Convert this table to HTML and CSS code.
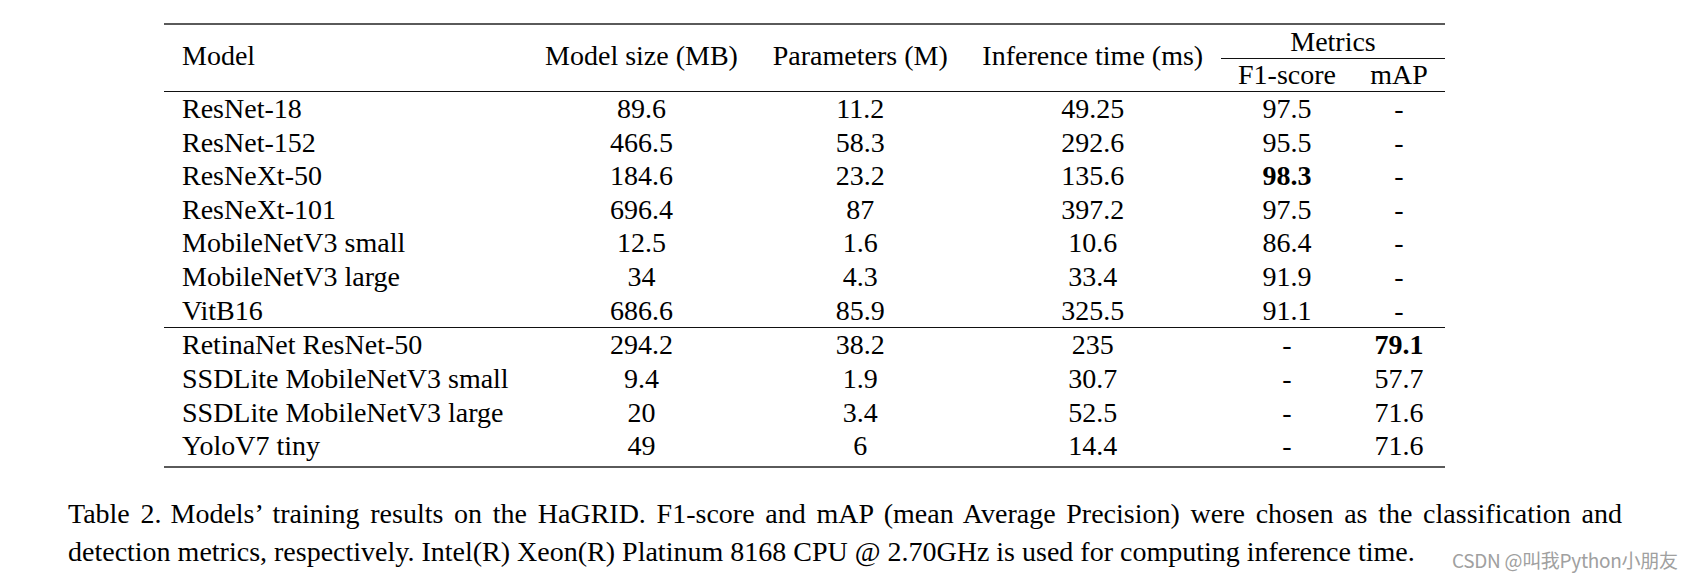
FILE: index.html
```html
<!DOCTYPE html>
<html lang="en">
<head>
<meta charset="utf-8">
<title>Table 2</title>
<link rel="stylesheet" href="styles.css">
</head>
<body>
<div class="page">
  <div class="table-wrap">
    <table class="results">
      <colgroup>
        <col class="c-model">
        <col class="c-size">
        <col class="c-params">
        <col class="c-time">
        <col class="c-f1">
        <col class="c-map">
      </colgroup>
      <thead>
        <tr>
          <th rowspan="2" class="left head-span">Model</th>
          <th rowspan="2" class="head-span">Model size (MB)</th>
          <th rowspan="2" class="head-span">Parameters (M)</th>
          <th rowspan="2" class="head-span">Inference time (ms)</th>
          <th colspan="2" class="group">Metrics</th>
        </tr>
        <tr>
          <th class="sub">F1-score</th>
          <th class="sub">mAP</th>
        </tr>
      </thead>
      <tbody class="cls">
        <tr><td class="left">ResNet-18</td><td>89.6</td><td>11.2</td><td>49.25</td><td>97.5</td><td>-</td></tr>
        <tr><td class="left">ResNet-152</td><td>466.5</td><td>58.3</td><td>292.6</td><td>95.5</td><td>-</td></tr>
        <tr><td class="left">ResNeXt-50</td><td>184.6</td><td>23.2</td><td>135.6</td><td class="best">98.3</td><td>-</td></tr>
        <tr><td class="left">ResNeXt-101</td><td>696.4</td><td>87</td><td>397.2</td><td>97.5</td><td>-</td></tr>
        <tr><td class="left">MobileNetV3 small</td><td>12.5</td><td>1.6</td><td>10.6</td><td>86.4</td><td>-</td></tr>
        <tr><td class="left">MobileNetV3 large</td><td>34</td><td>4.3</td><td>33.4</td><td>91.9</td><td>-</td></tr>
        <tr class="sep"><td class="left">VitB16</td><td>686.6</td><td>85.9</td><td>325.5</td><td>91.1</td><td>-</td></tr>
      </tbody>
      <tbody class="det">
        <tr><td class="left">RetinaNet ResNet-50</td><td>294.2</td><td>38.2</td><td>235</td><td>-</td><td class="best">79.1</td></tr>
        <tr><td class="left">SSDLite MobileNetV3 small</td><td>9.4</td><td>1.9</td><td>30.7</td><td>-</td><td>57.7</td></tr>
        <tr><td class="left">SSDLite MobileNetV3 large</td><td>20</td><td>3.4</td><td>52.5</td><td>-</td><td>71.6</td></tr>
        <tr class="last"><td class="left">YoloV7 tiny</td><td>49</td><td>6</td><td>14.4</td><td>-</td><td>71.6</td></tr>
      </tbody>
    </table>
  </div>
  <p class="caption">
    <span class="line1">Table 2.<span class="gap"></span>Models’ training results on the HaGRID. F1-score and mAP (mean Average Precision) were chosen as the classification and</span>
    <span class="line2">detection metrics, respectively. Intel(R) Xeon(R) Platinum 8168 CPU @ 2.70GHz is used for computing inference time.</span>
  </p>
  <div class="watermark">CSDN @叫我Python小朋友</div>
</div>
</body>
</html>
```

FILE: styles.css
```css
html, body {
  margin: 0;
  padding: 0;
  background: #ffffff;
}

.page {
  position: relative;
  width: 1696px;
  height: 580px;
  overflow: hidden;
  font-family: "Liberation Serif", "Times New Roman", serif;
  color: #000;
}

.table-wrap {
  padding: 23px 0 0 164px;
}

.results {
  width: 1281px;
  table-layout: fixed;
  border-collapse: separate;
  border-spacing: 0;
  border-top: 2px solid #5a5a5a;
  border-bottom: 2px solid #5a5a5a;
  font-size: 28px;
}

.c-model { width: 363px; }
.c-size { width: 229px; }
.c-params { width: 208.5px; }
.c-time { width: 256.5px; }
.c-f1 { width: 132px; }
.c-map { width: 92px; }

.results th,
.results td {
  padding: 0 12px;
  text-align: center;
  font-weight: normal;
  white-space: nowrap;
  line-height: 33.6px;
}

.results .left {
  text-align: left;
  padding-left: 18px;
}

.results th.head-span {
  vertical-align: middle;
  border-bottom: 1px solid #111;
  padding-bottom: 4px;
}

.results th.group {
  line-height: 33px;
  border-bottom: 1px solid #111;
}

.results th.sub {
  line-height: 32px;
  border-bottom: 1px solid #111;
}

.results tr.sep td {
  border-bottom: 1px solid #111;
}

.results tr.last td {
  padding-bottom: 3px;
}

.results tbody.det td {
  line-height: 33.75px;
}

.results .best {
  font-weight: bold;
}

.caption {
  margin: 27px 0 0 68px;
  width: 1554px;
  font-size: 28px;
  line-height: 37.6px;
}

.caption .line1 {
  display: block;
  text-align: justify;
  text-align-last: justify;
}

.caption .line2 {
  display: block;
  text-align: left;
}

.caption .gap {
  display: inline-block;
  width: 9px;
}

.watermark {
  position: absolute;
  left: 1452px;
  top: 548px;
  font-family: "Noto Sans CJK SC", "Noto Sans", sans-serif;
  font-size: 19px;
  line-height: 24px;
  color: #a0a0a0;
  letter-spacing: -0.3px;
}
```
